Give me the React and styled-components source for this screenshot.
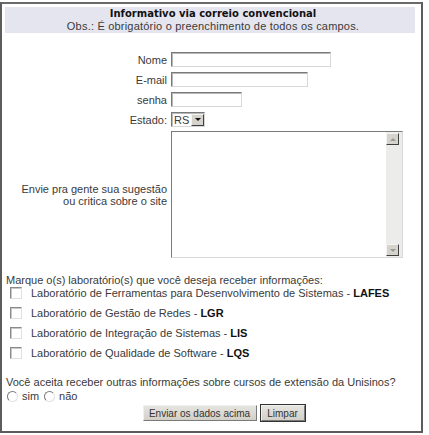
import React from "react";
import styled, {createGlobalStyle} from 'styled-components';

const GlobalStyle = createGlobalStyle`
  body {
    margin: 0;
    background: #fff;
    font-family: "Liberation Sans", Arial, sans-serif;
    font-size: 11px;
    color: #3a3a3a;
  }
`;

const INSET = `
  border-style: solid;
  border-width: 1px;
  border-color: #7a7a7a #d8d8d8 #d8d8d8 #7a7a7a;
  box-shadow: inset 1px 1px 0 #b8b8b8;
`;

const Frame = styled.div`
  box-sizing: border-box;
  width: 423px;
  height: 431px;
  margin-top: 2px;
  border: 2px solid #5c5c5c;
  border-top-color: #6a6a6a;
  padding: 3px 6px 0 3px;
`;

const Header = styled.div`
  background: #e5e5ef;
  height: 26px;
  padding-left: 6px;
  text-align: center;
  line-height: 12px;

  h1 {
    margin: 0;
    padding-top: 1px;
    font-family: "DejaVu Sans", Verdana, sans-serif;
    font-size: 10px;
    font-weight: bold;
    color: #111;
  }

  p { margin: 0; letter-spacing: 0.2px; }
`;

const FormGrid = styled.div`
  display: grid;
  grid-template-columns: 162px auto;
  column-gap: 4px;
  row-gap: 5px;
  margin-top: 19px;
`;

const Label = styled.label`
  justify-self: end;
  align-self: center;
  text-align: right;
  line-height: 12px;
`;

const TextInput = styled.input`
  ${INSET};
  box-sizing: border-box;
  width: ${props => props.$w}px;
  height: 15px;
  padding: 0 2px;
  font: inherit;
  outline: none;
`;

const Select = styled.div`
  ${INSET};
  box-sizing: border-box;
  width: 34px;
  height: 15px;
  display: flex;
  align-items: center;
  justify-content: space-between;
  padding-left: 2px;
  line-height: 12px;
  background: #fff;
`;

const ArrowButton = styled.span`
  box-sizing: border-box;
  width: 13px;
  height: 12px;
  background: #d6d3cc;
  border: 1px solid;
  border-color: #f4f4f4 #404040 #404040 #f4f4f4;
  display: flex;
  align-items: center;
  justify-content: center;

  &::after {
    content: "";
    border-left: 3px solid transparent;
    border-right: 3px solid transparent;
    border-${props => props.$up ? 'bottom' : 'top'}: 3px solid ${props => props.$faint ? '#9a9a9a' : '#111'};
  }
`;

const TextBox = styled.div`
  ${INSET};
  box-sizing: border-box;
  width: 232px;
  height: 127px;
  margin-top: -1px;
  display: flex;
  background: #fff;

  textarea {
    flex: 1;
    border: none;
    resize: none;
    outline: none;
    font: inherit;
  }
`;

const ScrollBar = styled.div`
  width: 15px;
  background: #ececea;
  display: flex;
  flex-direction: column;
  justify-content: space-between;
  padding: 1px 1px 1px 0;
`;

const Intro = styled.p`
  margin: 16px 0 0 1px;
  line-height: 12px;
`;

const LabList = styled.ul`
  list-style: none;
  margin: -3px 0 0;
  padding: 0;
`;

const LabRow = styled.li`
  height: 20px;
  display: flex;
  align-items: center;
  padding-left: 5px;

  b { color: #111; }
`;

const CheckBox = styled.span`
  box-sizing: border-box;
  width: 12px;
  height: 12px;
  margin-right: 9px;
  border: 1px solid;
  border-color: #8a8a8a #e0e0e0 #e0e0e0 #8a8a8a;
  box-shadow: inset 1px 1px 0 #c8c8c8;
  background: #fff;
`;

const Question = styled.p`
  margin: 12px 0 0 1px;
  line-height: 14px;
`;

const RadioRow = styled.div`
  display: flex;
  align-items: center;
  height: 14px;
  padding-left: 2px;
`;

const Radio = styled.span`
  box-sizing: border-box;
  width: 11px;
  height: 11px;
  border-radius: 50%;
  border: 1px solid;
  border-color: #7a7a7a #e2e2e2 #e2e2e2 #7a7a7a;
  margin-right: 4px;
  margin-left: ${props => props.$gap || 0}px;
`;

const Buttons = styled.div`
  display: flex;
  justify-content: center;
  gap: 4px;
  margin-top: 2px;
  padding-left: 27px;
`;

const Button = styled.button`
  box-sizing: border-box;
  width: ${props => props.$w}px;
  height: 16px;
  padding: 0;
  font: inherit;
  font-size: 10px;
  color: #333;
  background: linear-gradient(#e6e4df, #d2cfc7);
  border: 1px solid;
  border-color: #f0f0f0 #7a7a7a #7a7a7a #f0f0f0;
  outline: ${props => props.$default ? '1px solid #333' : 'none'};
  outline-offset: 0;
`;

const labs = [
  ['Laboratório de Ferramentas para Desenvolvimento de Sistemas', 'LAFES'],
  ['Laboratório de Gestão de Redes', 'LGR'],
  ['Laboratório de Integração de Sistemas', 'LIS'],
  ['Laboratório de Qualidade de Software', 'LQS'],
];

export default function App() {
  return (
    <>
      <GlobalStyle />
      <Frame>
        <Header>
          <h1>Informativo via correio convencional</h1>
          <p>Obs.: É obrigatório o preenchimento de todos os campos.</p>
        </Header>

        <FormGrid>
          <Label>Nome</Label>
          <TextInput $w={160} />
          <Label>E-mail</Label>
          <TextInput $w={137} />
          <Label>senha</Label>
          <TextInput $w={71} type="password" />
          <Label>Estado:</Label>
          <Select>RS<ArrowButton /></Select>
          <Label>Envie pra gente sua sugestão<br />ou critica sobre o site</Label>
          <TextBox>
            <textarea />
            <ScrollBar>
              <ArrowButton $up $faint />
              <ArrowButton $faint />
            </ScrollBar>
          </TextBox>
        </FormGrid>

        <Intro>Marque o(s) laboratório(s) que você deseja receber informações:</Intro>
        <LabList>
          {labs.map(([name, code]) => (
            <LabRow key={code}>
              <CheckBox />
              <span>{name} - <b>{code}</b></span>
            </LabRow>
          ))}
        </LabList>

        <Question>Você aceita receber outras informações sobre cursos de extensão da Unisinos?</Question>
        <RadioRow>
          <Radio />sim
          <Radio $gap={5} />não
        </RadioRow>

        <Buttons>
          <Button $w={114}>Enviar os dados acima</Button>
          <Button $w={44} $default>Limpar</Button>
        </Buttons>
      </Frame>
    </>
  );
}
